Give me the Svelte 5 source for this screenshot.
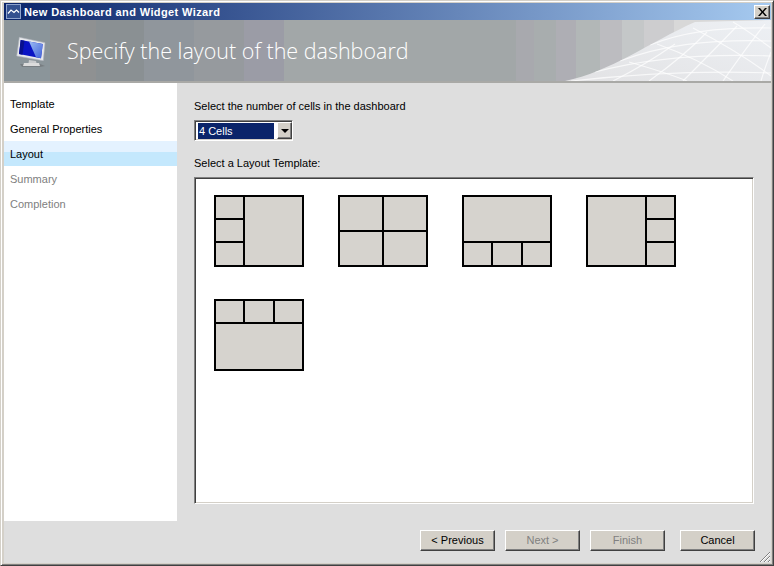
<script lang="ts">
	const steps = [
		{ label: 'Template', state: '' },
		{ label: 'General Properties', state: '' },
		{ label: 'Layout', state: 'active' },
		{ label: 'Summary', state: 'off' },
		{ label: 'Completion', state: 'off' }
	];

	// each tile is a small grid: columns, rows, and which cell spans
	const tiles = [
		{ cols: '27px 57px', rows: '21px 21px 22px', cells: ['', 'tall', '', ''] },
		{ cols: '42px 42px', rows: '33px 33px', cells: ['', '', '', ''] },
		{ cols: '27px 28px 27px', rows: '44px 22px', cells: ['wide', '', '', ''] },
		{ cols: '57px 27px', rows: '21px 21px 22px', cells: ['tall', '', '', ''] },
		{ cols: '27px 28px 27px', rows: '21px 45px', cells: ['', '', '', 'wide'] }
	];

	const buttons = [
		{ label: '< Previous', disabled: false },
		{ label: 'Next >', disabled: true },
		{ label: 'Finish', disabled: true },
		{ label: 'Cancel', disabled: false }
	];
</script>

<div class="window">
	<div class="titlebar">
		<svg class="app-icon" width="15" height="15" viewBox="0 0 15 15">
			<rect x="0.5" y="0.5" width="14" height="14" fill="#33508f" stroke="#8ea3cc" />
			<path d="M2 9.500 L5 6 L8 8.500 L10.500 6 L13 8.500" fill="none" stroke="#fff" stroke-width="1.200" />
		</svg>
		<span class="title-text">New Dashboard and Widget Wizard</span>
		<button class="close" aria-label="Close">
			<svg width="9" height="8" viewBox="0 0 9 8"><path d="M0 0h2l2.500 3L7 0h2L5.500 4 9 8H7L4.500 5 2 8H0l3.500-4z" fill="#000" /></svg>
		</button>
	</div>

	<div class="header">
		<svg class="monitor" width="30" height="32" viewBox="0 0 30 32">
			<defs>
				<linearGradient id="glass" x1="0" y1="0" x2="1" y2="1">
					<stop offset="0" stop-color="#9dbcf4" />
					<stop offset="1" stop-color="#3f62d8" />
				</linearGradient>
			</defs>
			<path d="M4 28 L24 28 L29 30 L24 31 L6 31 Z" fill="#6d7073" opacity="0.6" />
			<path d="M3.300 1.300 L29 6.700 L27.300 24.700 L0.700 20 Z" fill="#e6e8ec" stroke="#aeb2ba" stroke-width="0.6" />
			<path d="M4.700 4 L26.700 8 L25 22.300 L3 18 Z" fill="#0a14c4" />
			<path d="M13 5.500 L26.700 8 L25 22.300 L20 21.300 Z" fill="url(#glass)" />
			<path d="M4.700 4 L8.500 4.700 L6.500 18.700 L3 18 Z" fill="#08108e" />
			<path d="M13 24 L20 25 L20.500 27 L12.500 27 Z" fill="#c9cbcd" />
			<path d="M8 27 L23 27 L24 30 L7 30 Z" fill="#dcdcdc" />
		</svg>
		<h1>Specify the layout of the dashboard</h1>
		<svg class="mesh" width="206" height="61" viewBox="0 0 206 61">
			<defs>
				<linearGradient id="sheet" x1="0" y1="1" x2="1" y2="0">
					<stop offset="0" stop-color="#e2e2e4" />
					<stop offset="1" stop-color="#edf0f4" />
				</linearGradient>
				<clipPath id="edge"><path d="M0 61 C45 52 85 22 130 2 L206 0 L206 61 Z" /></clipPath>
			</defs>
			<path d="M0 61 C45 52 85 22 130 2 L206 0 L206 61 Z" fill="url(#sheet)" />
			<g fill="none" stroke="#fff" stroke-width="1.200" stroke-opacity="0.7" clip-path="url(#edge)">
				<path d="M6 61 C60 55 130 50 206 53" />
				<path d="M30 52 C75 40 130 33 206 36" />
				<path d="M55 41 C95 26 140 19 206 21" />
				<path d="M85 25 C115 13 150 7 206 8" />
				<path d="M48 61 C70 50 90 38 110 24" />
				<path d="M84 61 C105 46 125 30 142 12" />
				<path d="M118 61 C135 44 155 24 172 6" />
				<path d="M158 61 C170 44 184 24 200 4" />
				<path d="M196 61 C199 50 203 40 206 32" />
				<path d="M64 42 C85 48 105 54 122 61" />
				<path d="M92 24 C120 34 145 46 168 61" />
				<path d="M128 8 C155 22 185 40 206 56" />
				<path d="M168 2 C182 10 195 20 206 28" />
			</g>
		</svg>
	</div>

	<div class="body">
		<nav class="steps">
			{#each steps as step}
				<div class="step {step.state}">{step.label}</div>
			{/each}
		</nav>

		<main class="content">
			<label class="field-label" for="cells">Select the number of cells in the dashboard</label>
			<div class="combo" id="cells">
				<span class="combo-value">4 Cells</span>
				<span class="combo-btn"><i></i></span>
			</div>
			<div class="field-label second">Select a Layout Template:</div>
			<div class="panel">
				{#each tiles as tile}
					<div class="tile" style="grid-template-columns: {tile.cols}; grid-template-rows: {tile.rows}">
						{#each tile.cells as cell}
							<div class="cell {cell}"></div>
						{/each}
					</div>
				{/each}
			</div>
		</main>
	</div>

	<footer class="footer">
		{#each buttons as b}
			<button class="btn" disabled={b.disabled}>{b.label}</button>
		{/each}
		<svg class="grip" width="12" height="12" viewBox="0 0 12 12">
			<path d="M11 1 L1 11 M11 5 L5 11 M11 9 L9 11" stroke="#808080" stroke-width="1" fill="none" />
			<path d="M11 2 L2 11 M11 6 L6 11 M11 10 L10 11" stroke="#fff" stroke-width="1" fill="none" />
		</svg>
	</footer>
</div>

<style>
	:global(body) { margin: 0; overflow: hidden; background: #d4d0c8; }

	.window {
		box-sizing: border-box;
		width: 774px;
		height: 566px;
		display: flex;
		flex-direction: column;
		padding: 2px 2px 2px 3px;
		border: 1px solid;
		border-color: #d4d0c8 #404040 #404040 #d4d0c8;
		box-shadow: inset 1px 1px 0 #fff, inset -1px -1px 0 #808080;
		background: #d4d0c8;
		font-family: "Liberation Sans", Arial, sans-serif;
		font-size: 11px;
		color: #000;
	}

	.titlebar {
		height: 17px;
		flex: none;
		display: flex;
		align-items: center;
		padding: 0 1px 0 2px;
		background: linear-gradient(to right, #0a246a, #a6caf0);
		color: #fff;
		font-weight: 700;
		font-size: 11px;
	}
	.app-icon { flex: none; margin-right: 3px; }
	.title-text { flex: 1; letter-spacing: 0.035em; }
	.close {
		width: 16px;
		height: 14px;
		padding: 0;
		display: flex;
		align-items: center;
		justify-content: center;
		background: #d4d0c8;
		border: 1px solid;
		border-color: #fff #404040 #404040 #fff;
		box-shadow: inset -1px -1px 0 #808080;
	}

	.header {
		height: 61px;
		flex: none;
		display: flex;
		align-items: center;
		border-bottom: 2px solid #a9a9a6;
		background: linear-gradient(to right,
			#8b959a 0 46px, #8f9192 46px 92px, #8a9093 92px 140px, #90969c 140px 190px,
			#969a9e 190px 240px, #9b9ca6 240px 280px, #a2a7a8 280px 512px,
			#a8a9ae 512px 530px, #a8adae 530px 552px, #aeaeb4 552px 572px, #b2b7b7 572px 596px,
			#bcbcc0 596px 618px, #c4c7c8 618px 640px, #cdcdcf 640px 670px, #d8d8d8 670px);
	}
	.monitor { flex: none; align-self: flex-start; margin: 16px 0 0 12px; }
	.header h1 {
		flex: 1;
		margin: 0 0 0 21px;
		font-family: "Open Sans", sans-serif;
		font-weight: 300;
		font-size: 21.5px;
		color: #fff;
		white-space: nowrap;
	}
	.mesh { flex: none; align-self: flex-end; }

	.body { height: 438px; flex: none; display: flex; background: #dedede; }

	.steps {
		width: 173px;
		flex: none;
		box-sizing: border-box;
		padding-top: 8px;
		background: #fff;
	}
	.step { height: 25px; line-height: 27px; padding-left: 6px; }
	.step.active { background: linear-gradient(to bottom, #e4f2ff 0 11px, #c4e8fd 11px); }
	.step.off { color: #808080; }

	.content { flex: 1; display: flex; flex-direction: column; padding: 17px 16px 17px 17px; min-width: 0; }
	.field-label { display: block; line-height: 13px; }
	.second { margin-top: 16px; }

	.combo {
		box-sizing: border-box;
		width: 99px;
		height: 21px;
		margin-top: 7px;
		display: flex;
		padding: 1px 0 1px 1px;
		gap: 1px;
		background: #fff;
		border: 1px solid;
		border-color: #808080 #fff #fff #808080;
		box-shadow: inset 1px 1px 0 #404040, inset -1px -1px 0 #d4d0c8;
	}
	.combo-value {
		flex: 1;
		height: 16px;
		margin: 1px 2px 0 2px;
		padding-left: 1px;
		line-height: 16px;
		background: #0a246a;
		color: #fff;
	}
	.combo-btn {
		width: 15px;
		flex: none;
		box-sizing: border-box;
		display: flex;
		align-items: center;
		justify-content: center;
		background: #d4d0c8;
		border: 1px solid;
		border-color: #fff #404040 #404040 #fff;
		box-shadow: inset -1px -1px 0 #808080;
	}
	.combo-btn i {
		width: 0;
		height: 0;
		border-left: 4px solid transparent;
		border-right: 4px solid transparent;
		border-top: 4px solid #000;
	}

	.panel {
		flex: 1;
		box-sizing: border-box;
		margin-top: 7px;
		width: 560px;
		display: flex;
		flex-wrap: wrap;
		align-content: flex-start;
		gap: 32px 34px;
		padding: 17px 19px;
		background: #fff;
		border: 1px solid;
		border-color: #808080 #fff #fff #808080;
		box-shadow: inset 1px 1px 0 #404040, inset -1px -1px 0 #d4d0c8;
	}

	.tile {
		display: grid;
		gap: 2px;
		width: 90px;
		height: 72px;
		box-sizing: border-box;
		border: 2px solid #000;
		background: #000;
	}
	.cell { background: #d6d3ce; }
	.cell.tall { grid-row: span 3; }
	.cell.wide { grid-column: span 3; }

	.footer {
		flex: 1;
		display: flex;
		align-items: flex-start;
		padding: 9px 16px 0 0;
		justify-content: flex-end;
		gap: 10px;
		background: #dedede;
		position: relative;
	}
	.btn {
		box-sizing: border-box;
		width: 75px;
		height: 21px;
		padding: 0 0 1px;
		font: inherit;
		color: #000;
		background: #d4d0c8;
		border: 1px solid;
		border-color: #fff #404040 #404040 #fff;
		box-shadow: inset -1px -1px 0 #808080;
	}
	.btn:disabled { color: #808080; }
	.btn:last-of-type { margin-left: 5px; }
	.grip { position: absolute; right: 0; bottom: 0; }
</style>
